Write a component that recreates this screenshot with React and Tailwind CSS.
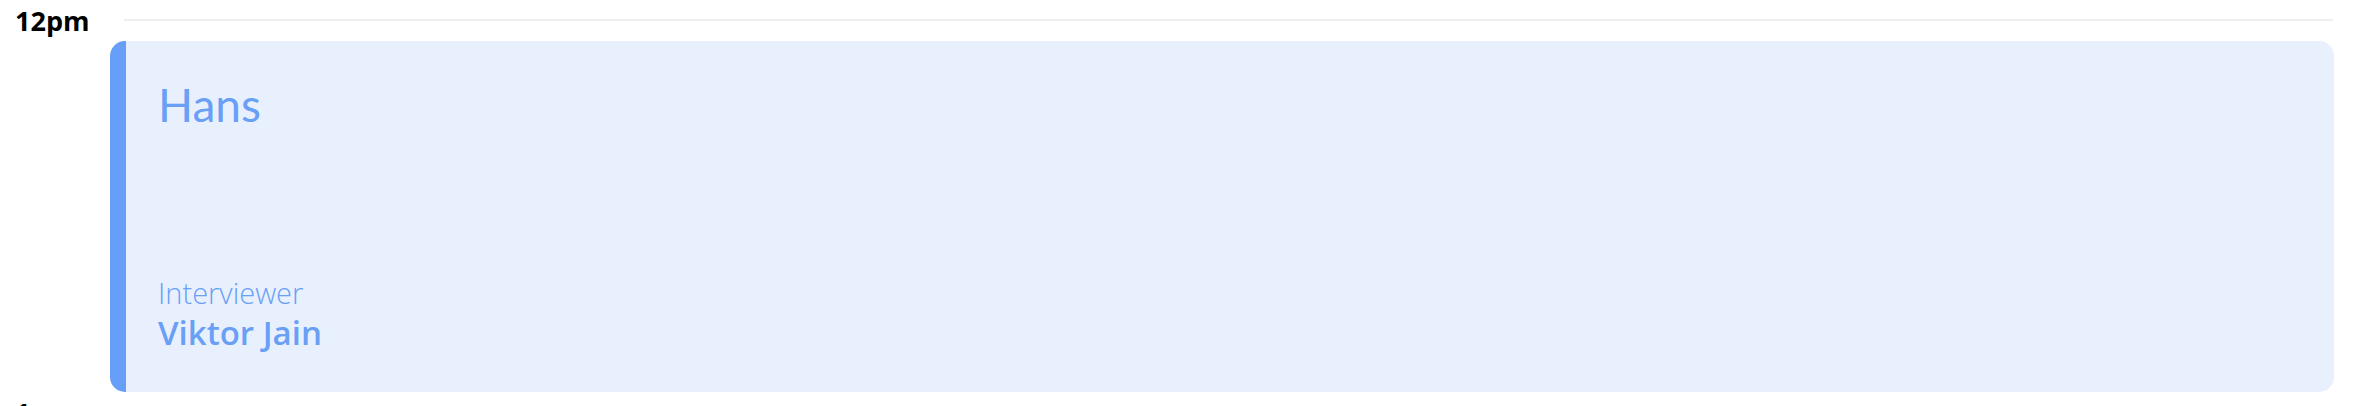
export default function App() {
  return (
    <div className="w-[2366px] h-[406px] overflow-hidden bg-white font-['Lato','Open_Sans',sans-serif]">
      {/* 12pm row */}
      <div className="flex items-start h-[40px]">
        <div className="w-[124px] pl-[15px] pt-[3px] font-['Open_Sans',sans-serif] text-[27px] leading-[36px] font-bold text-black">
          12pm
        </div>
        <div className="flex-1 mt-[19px] mr-[33px] h-[2px] bg-[#efefef]" />
      </div>

      {/* event card */}
      <div className="mt-[1px] ml-[110px] mr-[32px] h-[351px] rounded-[15px] border-l-[16px] border-[#679ef8] bg-[#e8f0fd] pl-[32px] pt-[36px] pb-[39px] flex flex-col justify-between text-[#6a9ff6]">
        <div className="text-[46px] leading-[56px]">Hans</div>
        <div className="flex flex-col font-['Open_Sans',sans-serif]">
          <span className="mb-[2px] text-[29px] leading-[36px] font-light">Interviewer</span>
          <span className="text-[33px] leading-[40px] font-semibold">Viktor Jain</span>
        </div>
      </div>

      {/* 1pm row */}
      <div className="flex items-start h-[40px]">
        <div className="w-[124px] pl-[15px] pt-[3px] font-['Open_Sans',sans-serif] text-[27px] leading-[36px] font-bold text-black">
          1pm
        </div>
        <div className="flex-1 mt-[19px] mr-[33px] h-[2px] bg-[#efefef]" />
      </div>
    </div>
  );
}
